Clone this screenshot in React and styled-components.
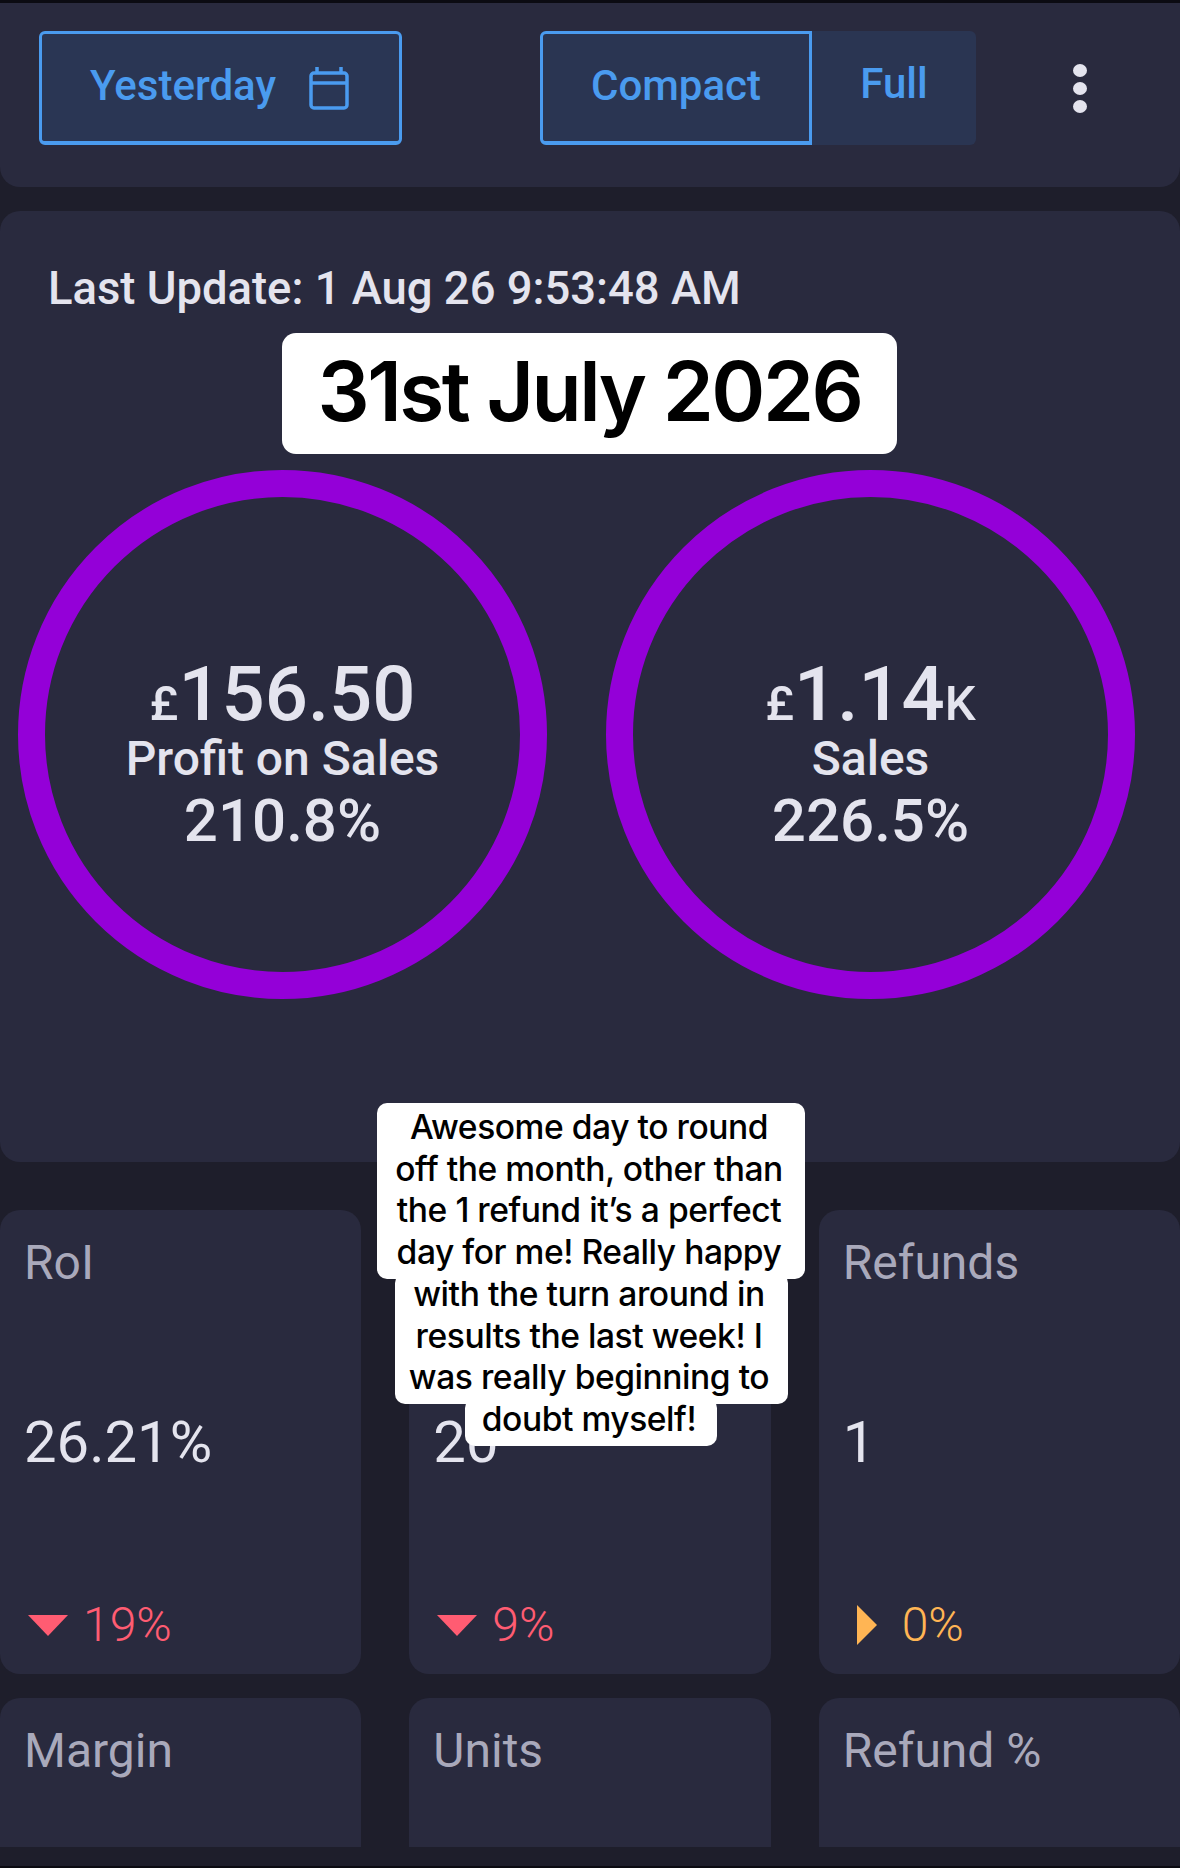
import React from 'react';
import styled, { createGlobalStyle } from 'styled-components';

const GlobalStyle = createGlobalStyle`
  html, body {
    margin: 0;
    padding: 0;
    background: #1e1e2b;
  }
  * {
    box-sizing: border-box;
  }
`;

const Page = styled.div`
  position: relative;
  width: 1180px;
  height: 1868px;
  overflow: hidden;
  background: #1e1e2b;
  border-top: 3px solid #0b0b12;
  border-bottom: 2px solid #0b0b12;
  font-family: Roboto, "Liberation Sans", sans-serif;
  color: #e4e4ee;
`;

const Toolbar = styled.div`
  display: flex;
  align-items: flex-start;
  height: 184px;
  padding: 28px 0 0 39px;
  background: #292a3e;
  border-radius: 0 0 20px 20px;
`;

const DateButton = styled.div`
  display: flex;
  align-items: center;
  width: 363px;
  height: 114px;
  padding: 0 0 0 48px;
  gap: 33px;
  background: #2a3654;
  border: 3px solid #4a9bef;
  border-bottom-width: 4px;
  border-radius: 6px;
  color: #4a9bef;
  font-size: 42px;
  font-weight: 500;
`;

const DateLabel = styled.span`
  padding-bottom: 4px;
`;

const Toggle = styled.div`
  display: flex;
  width: 436px;
  height: 114px;
  margin-left: 138px;
  background: #2a3552;
  border-radius: 6px;
`;

const ToggleOption = styled.div`
  display: flex;
  align-items: center;
  justify-content: center;
  width: ${props => (props.$active ? '272px' : '164px')};
  height: 100%;
  padding-bottom: ${props => (props.$active ? '4px' : '10px')};
  border: ${props => (props.$active ? '3px solid #4a9bef' : 'none')};
  border-bottom-width: ${props => (props.$active ? '4px' : '0')};
  border-radius: ${props => (props.$active ? '6px 0 0 6px' : '0 6px 6px 0')};
  color: #4a9bef;
  font-size: 42px;
  font-weight: 500;
`;

const Dots = styled.div`
  display: flex;
  flex-direction: column;
  gap: 5px;
  margin: 33px 0 0 97px;
`;

const Dot = styled.span`
  display: block;
  width: 14px;
  height: 13px;
  border-radius: 50%;
  background: #e4e4ee;
`;

const Summary = styled.section`
  height: 951px;
  margin-top: 24px;
  padding: 0 18px;
  background: #292a3e;
  border-radius: 20px;
`;

const LastUpdate = styled.div`
  height: 259px;
  padding: 51px 0 0 30px;
  font-size: 45.4px;
  font-weight: 500;
  line-height: 54px;
`;

const Circles = styled.div`
  display: flex;
  gap: 59px;
`;

const Circle = styled.div`
  display: flex;
  flex-direction: column;
  align-items: center;
  justify-content: center;
  width: 529px;
  height: 529px;
  padding-top: 52px;
  border: 27px solid #9400d8;
  border-radius: 50%;
`;

const Amount = styled.div`
  font-size: 76px;
  font-weight: 500;
  line-height: 54px;
`;

const Unit = styled.span`
  font-size: 49px;
`;

const CircleLabel = styled.div`
  font-size: 48px;
  font-weight: 500;
  line-height: 56px;
`;

const Percent = styled.div`
  font-size: 60px;
  font-weight: 500;
  line-height: 68px;
`;

const Grid = styled.div`
  display: grid;
  grid-template-columns: repeat(3, 1fr);
  grid-template-rows: 464px 149px;
  gap: 24px 48px;
  margin-top: 48px;
`;

const Card = styled.div`
  display: flex;
  flex-direction: column;
  padding: 26px 24px 0;
  background: #292a3e;
  border-radius: ${props => (props.$clipped ? '20px 20px 0 0' : '20px')};
`;

const CardLabel = styled.div`
  min-height: 54px;
  font-size: 48px;
  line-height: 54px;
  color: #a9a9bb;
`;

const CardValue = styled.div`
  margin-top: 116px;
  font-size: 58px;
  line-height: 72px;
`;

const Delta = styled.div`
  display: flex;
  align-items: center;
  gap: 15px;
  margin-top: 117px;
  font-size: 48px;
  font-weight: 300;
  line-height: 60px;
  color: ${props => props.$color};
`;

const DeltaIcon = styled.span`
  display: flex;
  align-items: center;
  justify-content: center;
  width: 40px;
  margin-left: 4px;
`;

const TriangleDown = styled.span`
  border-left: 20px solid transparent;
  border-right: 20px solid transparent;
  border-top: 21px solid #ff5c72;
`;

const TriangleRight = styled.span`
  border-top: 20px solid transparent;
  border-bottom: 20px solid transparent;
  border-left: 20px solid #ffb554;
`;

const DateChip = styled.div`
  position: absolute;
  top: 330px;
  left: 282px;
  display: flex;
  align-items: center;
  justify-content: center;
  width: 615px;
  height: 121px;
  padding-bottom: 4px;
  background: #fff;
  border-radius: 14px;
  color: #000;
  font-family: Inter, "Liberation Sans", sans-serif;
  font-size: 82px;
  font-weight: 600;
  letter-spacing: -2.5px;
`;

const Caption = styled.div`
  position: absolute;
  top: 1100px;
  left: 1px;
  width: 100%;
  display: flex;
  flex-direction: column;
  align-items: center;
  color: #000;
  font-family: Inter, "Liberation Sans", sans-serif;
  font-size: 33.6px;
  font-weight: 500;
  line-height: 41.7px;
  letter-spacing: -0.45px;
  text-align: center;
`;

const CaptionBlock = styled.div`
  position: relative;
  z-index: ${props => props.$layer};
  width: ${props => props.$width}px;
  margin-bottom: -6px;
  padding: ${props => (props.$first ? '3px' : '0')} 4px 6px 0;
  background: #fff;
  border-radius: 10px;
  white-space: pre-line;
`;

const CalendarIcon = () => (
  <svg width="40" height="44" viewBox="0 0 40 44" fill="none" stroke="#4a9bef" strokeWidth="3.5" strokeLinejoin="round">
    <rect x="2" y="7" width="36" height="35" rx="3" />
    <path d="M2 17h36M8 1v7M32 1v7" />
  </svg>
);

const metrics = [
  { id: 'roi', label: 'RoI', value: '26.21%', delta: '19%', color: '#ff5c72', trend: 'down' },
  { id: 'middle', label: '', value: '20', delta: '9%', color: '#ff5c72', trend: 'down' },
  { id: 'refunds', label: 'Refunds', value: '1', delta: '0%', color: '#ffb554', trend: 'flat' },
];

const App = () => (
  <Page>
    <GlobalStyle />
    <Toolbar>
      <DateButton>
        <DateLabel>Yesterday</DateLabel>
        <CalendarIcon />
      </DateButton>
      <Toggle>
        <ToggleOption $active>Compact</ToggleOption>
        <ToggleOption>Full</ToggleOption>
      </Toggle>
      <Dots>
        <Dot />
        <Dot />
        <Dot />
      </Dots>
    </Toolbar>

    <Summary>
      <LastUpdate>Last Update: 1 Aug 26 9:53:48 AM</LastUpdate>
      <Circles>
        <Circle>
          <Amount><Unit>£</Unit>156.50</Amount>
          <CircleLabel>Profit on Sales</CircleLabel>
          <Percent>210.8%</Percent>
        </Circle>
        <Circle>
          <Amount><Unit>£</Unit>1.14<Unit>K</Unit></Amount>
          <CircleLabel>Sales</CircleLabel>
          <Percent>226.5%</Percent>
        </Circle>
      </Circles>
    </Summary>

    <Grid>
      {metrics.map(m => (
        <Card key={m.id}>
          <CardLabel>{m.label}</CardLabel>
          <CardValue>{m.value}</CardValue>
          <Delta $color={m.color}>
            <DeltaIcon>{m.trend === 'down' ? <TriangleDown /> : <TriangleRight />}</DeltaIcon>
            {m.delta}
          </Delta>
        </Card>
      ))}
      <Card $clipped><CardLabel>Margin</CardLabel></Card>
      <Card $clipped><CardLabel>Units</CardLabel></Card>
      <Card $clipped><CardLabel>Refund %</CardLabel></Card>
    </Grid>

    <DateChip>31st July 2026</DateChip>

    <Caption>
      <CaptionBlock $first $layer={3} $width={428}>{'Awesome day to round\noff the month, other than\nthe 1 refund it’s a perfect\nday for me! Really happy'}</CaptionBlock>
      <CaptionBlock $layer={2} $width={393}>{'with the turn around in\nresults the last week! I\nwas really beginning to'}</CaptionBlock>
      <CaptionBlock $layer={1} $width={252}>doubt myself!</CaptionBlock>
    </Caption>
  </Page>
);

export default App;
